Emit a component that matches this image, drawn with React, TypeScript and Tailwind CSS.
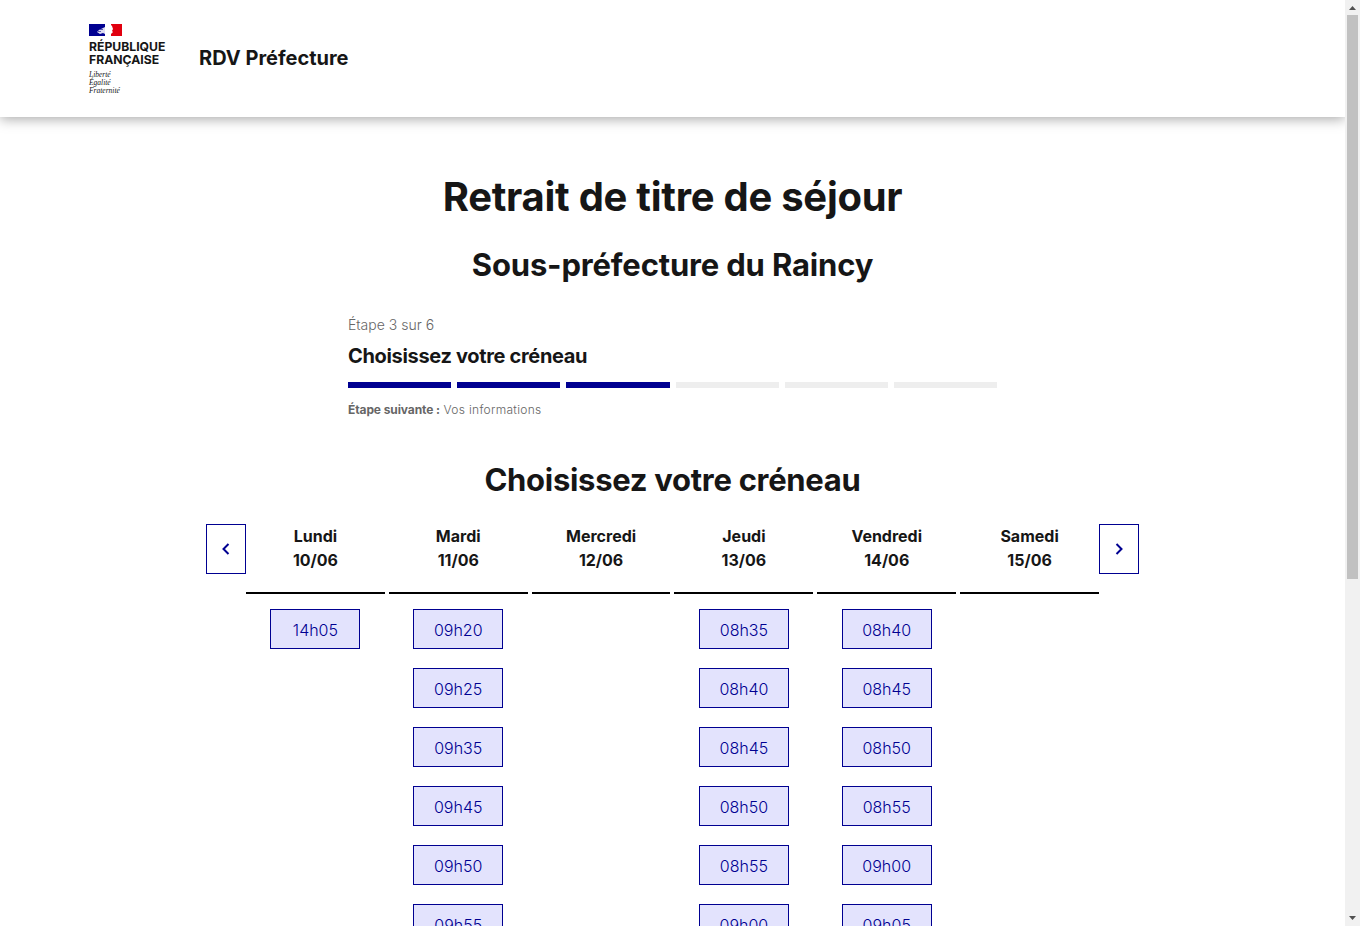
import React from "react";

const days = [
  { name: "Lundi", date: "10/06", slots: ["14h05"] },
  { name: "Mardi", date: "11/06", slots: ["09h20", "09h25", "09h35", "09h45", "09h50", "09h55"] },
  { name: "Mercredi", date: "12/06", slots: [] },
  { name: "Jeudi", date: "13/06", slots: ["08h35", "08h40", "08h45", "08h50", "08h55", "09h00"] },
  { name: "Vendredi", date: "14/06", slots: ["08h40", "08h45", "08h50", "08h55", "09h00", "09h05"] },
  { name: "Samedi", date: "15/06", slots: [] },
];

const steps = [true, true, true, false, false, false];

const Logo = () => (
  <div className="w-[78px] flex flex-col">
    <svg width="33" height="12" viewBox="0 0 33 12" className="block">
      <rect width="33" height="12" fill="#fff" />
      <rect width="16" height="12" fill="#000091" />
      <rect x="22" width="11" height="12" fill="#e1000f" />
      <path d="M16 0h5l2 2 1 3-1 2 1 1-2 2-1 2h-5z" fill="#fff" />
      <path d="M8 8l2-2 2-1 2-1 2-1v7l-2-1-3 1z" fill="#dcdcf2" />
      <path d="M9 7h3v1H9zM11 5h3v1h-3z" fill="#5a5ab0" />
    </svg>
    <div className="mt-1 text-[12.2px] leading-[13px] font-bold text-[#161616] whitespace-nowrap">
      RÉPUBLIQUE<br />FRANÇAISE
    </div>
    <div className="mt-[5px] text-[7.5px] leading-[8px] italic text-[#161616] font-['Liberation_Serif',serif]">
      Liberté<br />Égalité<br />Fraternité
    </div>
  </div>
);

const Chevron = ({ left }: { left?: boolean }) => (
  <svg width="12" height="14" viewBox="0 0 12 14" fill="none">
    <path d={left ? "M8.5 2 3.5 7l5 5" : "M3.5 2l5 5-5 5"} stroke="#000091" strokeWidth="2" />
  </svg>
);

const NavButton = ({ left }: { left?: boolean }) => (
  <button className="w-10 h-[50px] shrink-0 border border-[#000091] bg-white flex items-center justify-center">
    <Chevron left={left} />
  </button>
);

// the window's scrollbar, as it appears in the picture
const Scrollbar = () => (
  <div className="w-[15px] shrink-0 bg-[#f1f1f1] flex flex-col items-center">
    <svg width="7" height="4" viewBox="0 0 7 4" className="mt-[6px]">
      <path d="M3.5 0 7 4H0z" fill="#505050" />
    </svg>
    <div className="mt-[5px] w-[11px] h-[564px] bg-[#c1c1c1]" />
    <svg width="7" height="4" viewBox="0 0 7 4" className="mt-auto mb-[6px]">
      <path d="M0 0h7L3.5 4z" fill="#505050" />
    </svg>
  </div>
);

export default function App() {
  return (
    <div className="h-screen flex overflow-hidden bg-white text-[#161616] font-['Inter',sans-serif]">
      <div className="flex-1 min-w-0 overflow-hidden">
        <header className="h-[117px] px-[89px] pt-6 flex items-start bg-white shadow-[0_2px_12px_rgba(0,0,0,0.35)]">
          <Logo />
          <div className="ml-[32px] mt-[21px] text-[20px] leading-[26px] font-bold">RDV Préfecture</div>
        </header>

        <main className="flex flex-col items-center">
          <h1 className="mt-14 text-[40px] leading-[48px] font-bold text-center tracking-[-0.27px]">
            Retrait de titre de séjour
          </h1>
          <h2 className="mt-6 text-[31px] leading-10 font-bold text-center tracking-[-0.16px]">
            Sous-préfecture du Raincy
          </h2>

          <section className="mt-7 w-[649px]">
            <div className="text-sm leading-6 font-light text-[#666666]">Étape 3 sur 6</div>
            <div className="mt-[5px] text-[20px] leading-7 font-bold tracking-[-0.33px]">Choisissez votre créneau</div>
            <div className="mt-3 flex gap-[6px]">
              {steps.map((done, i) => (
                <div key={i} className={done ? "flex-1 h-[6px] bg-[#000091]" : "flex-1 h-[6px] bg-[#eeeeee]"} />
              ))}
            </div>
            <div className="mt-3 text-xs leading-5 font-light text-[#666666] tracking-[0.3px]">
              <span className="font-bold tracking-[-0.1px]">Étape suivante :</span> Vos informations
            </div>
          </section>

          <h2 className="mt-[40px] text-[31px] leading-10 font-bold text-center tracking-[-0.29px]">
            Choisissez votre créneau
          </h2>

          <section className="mt-6 w-[933px] flex items-start">
            <NavButton left />
            <div className="flex-1 flex gap-1">
              {days.map((day) => (
                <div key={day.name} className="flex-1 flex flex-col items-center">
                  <div className="w-full h-[70px] border-b-2 border-black text-center text-base leading-6 font-bold">
                    {day.name}
                    <br />
                    {day.date}
                  </div>
                  <div className="mt-[15px] flex flex-col gap-[19px]">
                    {day.slots.map((slot) => (
                      <button
                        key={slot}
                        className="w-[90px] h-10 pt-px border border-[#000091] bg-[#e3e3fd] text-[#000091] text-base font-light"
                      >
                        {slot}
                      </button>
                    ))}
                  </div>
                </div>
              ))}
            </div>
            <NavButton />
          </section>
        </main>
      </div>
      <Scrollbar />
    </div>
  );
}
